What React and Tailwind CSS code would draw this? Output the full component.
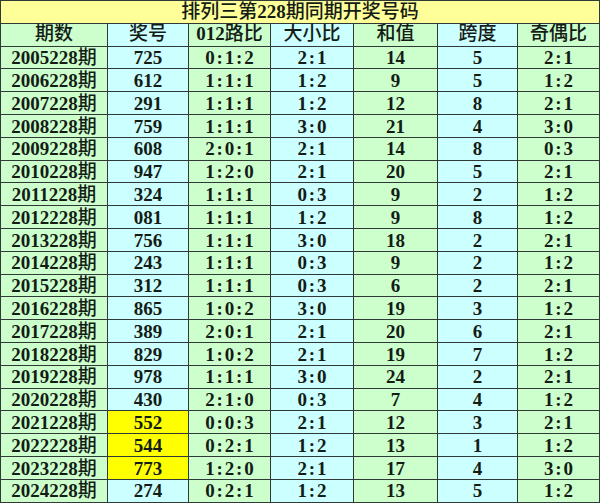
const headers = ["期数", "奖号", "012路比", "大小比", "和值", "跨度", "奇偶比"];

const rows = [
  ["2005228", "725", "0:1:2", "2:1", "14", "5", "2:1"],
  ["2006228", "612", "1:1:1", "1:2", "9", "5", "1:2"],
  ["2007228", "291", "1:1:1", "1:2", "12", "8", "2:1"],
  ["2008228", "759", "1:1:1", "3:0", "21", "4", "3:0"],
  ["2009228", "608", "2:0:1", "2:1", "14", "8", "0:3"],
  ["2010228", "947", "1:2:0", "2:1", "20", "5", "2:1"],
  ["2011228", "324", "1:1:1", "0:3", "9", "2", "1:2"],
  ["2012228", "081", "1:1:1", "1:2", "9", "8", "1:2"],
  ["2013228", "756", "1:1:1", "3:0", "18", "2", "2:1"],
  ["2014228", "243", "1:1:1", "0:3", "9", "2", "1:2"],
  ["2015228", "312", "1:1:1", "0:3", "6", "2", "2:1"],
  ["2016228", "865", "1:0:2", "3:0", "19", "3", "1:2"],
  ["2017228", "389", "2:0:1", "2:1", "20", "6", "2:1"],
  ["2018228", "829", "1:0:2", "2:1", "19", "7", "1:2"],
  ["2019228", "978", "1:1:1", "3:0", "24", "2", "2:1"],
  ["2020228", "430", "2:1:0", "0:3", "7", "4", "1:2"],
  ["2021228", "552", "0:0:3", "2:1", "12", "3", "2:1"],
  ["2022228", "544", "0:2:1", "1:2", "13", "1", "1:2"],
  ["2023228", "773", "1:2:0", "2:1", "17", "4", "3:0"],
  ["2024228", "274", "0:2:1", "1:2", "13", "5", "1:2"],
];

const hot = ["2021228", "2022228", "2023228"];

// spread the colons like the monospace original
const Ratio = ({ text }) =>
  text.split(":").map((part, i) => (
    <span key={i}>
      {i > 0 && <span className="inline-block w-[10px] text-center">:</span>}
      {part}
    </span>
  ));

const cellBg = (col) => (col % 2 === 0 ? "bg-[#ccffcc]" : "bg-[#ccffff]");

export default function App() {
  return (
    <div
      className="w-[600px] h-[503px] bg-white text-[#141c16] text-[19px] font-bold"
      style={{ fontFamily: '"Liberation Serif", "Noto Sans CJK SC", serif' }}
    >
      <div className="grid grid-cols-[107px_81px_82px_83px_84px_80px_82px] auto-rows-[22.8px] border-l border-t border-[#2f3a36]">
        {/* Title */}
        <div className="col-span-7 flex items-center justify-center bg-[#ffff99] border-r border-b border-[#2f3a36] font-medium">
          排列三第<span className="font-bold">228</span>期同期开奖号码
        </div>

        {/* Header */}
        {headers.map((h, i) => (
          <div
            key={h}
            className={`flex items-center justify-center border-r border-b border-[#2f3a36] font-medium ${cellBg(i)}`}
          >
            {h.startsWith("012") ? (
              <>
                <span className="font-bold">012</span>路比
              </>
            ) : (
              h
            )}
          </div>
        ))}

        {/* Rows */}
        {rows.map((r) =>
          r.map((v, i) => {
            const bg = i === 1 && hot.includes(r[0]) ? "bg-[#ffff00]" : cellBg(i);
            return (
              <div
                key={r[0] + i}
                className={`flex items-center justify-center pt-[2px] border-r border-b border-[#2f3a36] ${bg}`}
              >
                {i === 0 ? (
                  <>
                    {v}
                    <span className="font-medium">期</span>
                  </>
                ) : v.includes(":") ? (
                  <Ratio text={v} />
                ) : (
                  v
                )}
              </div>
            );
          })
        )}
      </div>
    </div>
  );
}
